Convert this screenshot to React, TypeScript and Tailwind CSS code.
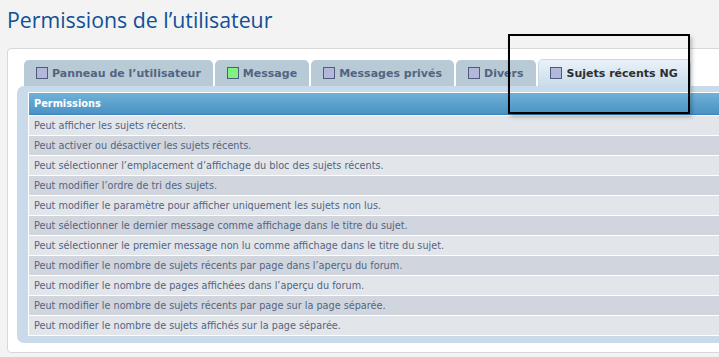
import React from "react";

const rows = [
  "Peut afficher les sujets récents.",
  "Peut activer ou désactiver les sujets récents.",
  "Peut sélectionner l’emplacement d’affichage du bloc des sujets récents.",
  "Peut modifier l’ordre de tri des sujets.",
  "Peut modifier le paramètre pour afficher uniquement les sujets non lus.",
  "Peut sélectionner le dernier message comme affichage dans le titre du sujet.",
  "Peut sélectionner le premier message non lu comme affichage dans le titre du sujet.",
  "Peut modifier le nombre de sujets récents par page dans l’aperçu du forum.",
  "Peut modifier le nombre de pages affichées dans l’aperçu du forum.",
  "Peut modifier le nombre de sujets récents par page sur la page séparée.",
  "Peut modifier le nombre de sujets affichés sur la page séparée.",
];

const tabs = [
  { label: "Panneau de l’utilisateur", green: false },
  { label: "Message", green: true },
  { label: "Messages privés", green: false },
  { label: "Divers", green: false },
];

function Box({ green }: { green?: boolean }) {
  return (
    <span
      className={
        "block w-[12px] h-[12px] border border-[#4e5a7e] shrink-0 " +
        (green ? "bg-[#82f27e]" : "bg-[#b4b7dc]")
      }
    />
  );
}

export default function App() {
  return (
    <div className="relative w-[719px] h-[357px] overflow-hidden bg-[#f3f3f3] font-['DejaVu_Sans',sans-serif]">
      <div className="h-[48px] pt-[6px] pl-[7px]">
        <h1 className="font-['Open_Sans',sans-serif] text-[21.3px] leading-[28px] text-[#115098] font-normal">
          Permissions de l’utilisateur
        </h1>
      </div>
      <div className="ml-[7px] w-[760px] border border-[#d8d8d8] rounded-[4px] bg-white pt-[10px] pl-[9px] pb-[9px]">
        <div className="flex items-end gap-[2px] pl-[7px] h-[27px]">
          {tabs.map((t) => (
            <div
              key={t.label}
              className="flex items-center h-[26px] pl-[12px] pr-[12px] gap-[4px] bg-[#b9cad7] rounded-t-[5px]"
            >
              <Box green={t.green} />
              <span className="text-[11px] font-bold text-[#536482] leading-none whitespace-nowrap">
                {t.label}
              </span>
            </div>
          ))}
          <div className="flex items-center h-[27px] pl-[11px] pr-[12px] gap-[5px] bg-gradient-to-b from-[#eaf2f9] to-[#cadcea] border border-b-0 border-[#c6d7e5] rounded-t-[5px]">
            <Box />
            <span className="text-[11px] font-bold text-[#2e2e2e] leading-none whitespace-nowrap">
              Sujets récents NG
            </span>
          </div>
        </div>
        <div className="bg-[#c9dbea] rounded-l-[7px] pt-[6px] pl-[11px] pb-[7px]">
          <div className="bg-white p-px flex flex-col gap-px">
            <div className="h-[22px] flex items-center pl-[5px] bg-gradient-to-b from-[#6fb2d8] to-[#4b92c4] border-b border-[#3a83bb]">
              <span className="text-[9.8px] font-bold text-white leading-none">Permissions</span>
            </div>
            {rows.map((r, i) => (
              <div
                key={r}
                className={
                  "h-[19px] flex items-center pl-[5px] " +
                  (i % 2 === 0 ? "bg-[#e2e6ea]" : "bg-[#d1d6de]")
                }
              >
                <span className="text-[9.7px] text-[#536482] leading-none whitespace-nowrap">{r}</span>
              </div>
            ))}
          </div>
        </div>
      </div>
      <div className="absolute left-[508px] top-[34px] w-[182px] h-[80px] border-2 border-black shadow-[2px_3px_4px_rgba(0,0,0,0.25)]" />
    </div>
  );
}
